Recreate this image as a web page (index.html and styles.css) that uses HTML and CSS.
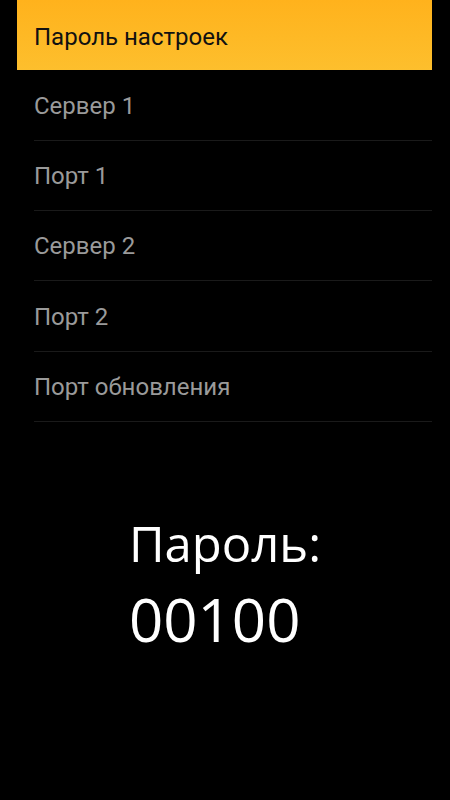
FILE: index.html
```html
<!DOCTYPE html>
<html lang="ru">
<head>
<meta charset="utf-8">
<link rel="stylesheet" href="styles.css">
</head>
<body>
<div class="screen">
  <ul class="menu">
    <li class="item active">Пароль настроек</li>
    <li class="item first">Сервер 1</li>
    <li class="item">Порт 1</li>
    <li class="item">Сервер 2</li>
    <li class="item second">Порт 2</li>
    <li class="item">Порт обновления</li>
  </ul>
  <div class="info">
    <div class="info-block">
      <div class="label">Пароль:</div>
      <div class="value">00100</div>
    </div>
  </div>
</div>
</body>
</html>
```
FILE: styles.css
```css
html, body {
  margin: 0;
  padding: 0;
  background: #000;
}
.screen {
  width: 450px;
  height: 800px;
  background: #000;
  display: flex;
  flex-direction: column;
}
.menu {
  list-style: none;
  margin: 0 18px 0 17px;
  padding: 0;
}
.item {
  height: 70px;
  box-sizing: border-box;
  display: flex;
  align-items: center;
  padding: 0 0 0 17px;
  font-family: Roboto, "Noto Sans", sans-serif;
  font-size: 24px;
  color: #9a9a9a;
  background: linear-gradient(#1a1a1a, #1a1a1a) no-repeat 17px 100% / calc(100% - 17px) 1px;
}
.item.first,
.item.second {
  height: 71px;
  padding-top: 1px;
}
.item.active {
  color: #111;
  background: linear-gradient(#ffb21c, #fdbf2d);
  padding-top: 4px;
}
.info {
  flex: 1;
  display: flex;
  justify-content: center;
  padding-top: 86px;
}
.info-block {
  font-family: "Open Sans", "Noto Sans", sans-serif;
  color: #fff;
}
.label {
  font-size: 49px;
  line-height: 70px;
}
.value {
  font-size: 60px;
  line-height: 82px;
}
```
